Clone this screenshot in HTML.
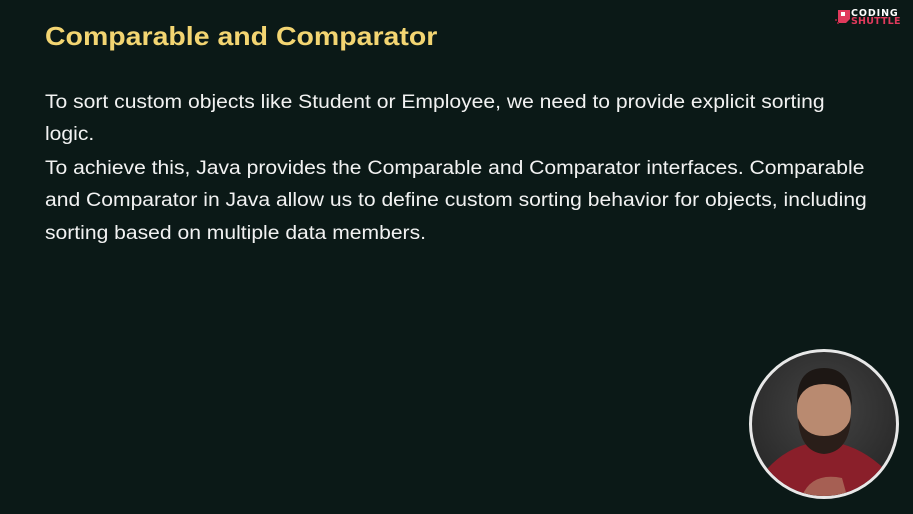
<!DOCTYPE html>
<html><head><meta charset="utf-8"><style>
html,body{margin:0;padding:0}
body{width:913px;height:514px;background:#0b1917;position:relative;overflow:hidden;font-family:"Liberation Sans",sans-serif}
.t{position:absolute;left:45px;top:21px;font-size:26px;font-weight:bold;color:#f3d572;white-space:nowrap;transform-origin:left top;transform:scaleX(1.095)}
.l{position:absolute;left:45px;font-size:19px;color:#f2f2f2;white-space:nowrap;transform-origin:left top;transform:scaleX(1.11)}
.logo{position:absolute;left:835px;top:9px}
.cw{position:absolute;left:851px;top:10px;font-size:9.5px;font-weight:bold;color:#fff;letter-spacing:0.9px;line-height:8px;font-family:"DejaVu Sans",sans-serif}
.cs{color:#e03a5c;letter-spacing:0.2px}
.circ{position:absolute;left:749px;top:349px;width:144px;height:144px;border-radius:50%;border:3px solid #e8e8e8;overflow:hidden;background:radial-gradient(circle at 50% 40%,#444 0,#2b2b2b 70%)}
</style></head><body>
<div class="t">Comparable and Comparator</div>
<div class="l" style="top:92px">To sort custom objects like Student or Employee, we need to provide explicit sorting</div>
<div class="l" style="top:124px">logic.</div>
<div class="l" style="top:158px">To achieve this, Java provides the Comparable and Comparator interfaces. Comparable</div>
<div class="l" style="top:190px">and Comparator in Java allow us to define custom sorting behavior for objects, including</div>
<div class="l" style="top:223px">sorting based on multiple data members.</div>
<svg class="logo" width="16" height="16" viewBox="0 0 16 16"><path d="M3 1h12v9l-4 4H3z" fill="#e03a5c"/><rect x="6" y="3" width="4" height="4" fill="#fff"/><rect x="0" y="10" width="2" height="2" fill="#8a2035"/><rect x="2" y="13" width="2" height="2" fill="#8a2035"/></svg>
<div class="cw">CODING<br><span class="cs">SHUTTLE</span></div>
<div class="circ">
<svg width="144" height="144" viewBox="0 0 144 144">
<path d="M5 130 Q25 100 55 92 L90 92 Q118 100 140 125 L144 144 H0z" fill="#8a1f2a"/>
<ellipse cx="72" cy="58" rx="27" ry="34" fill="#b98a70"/>
<path d="M45 52 Q44 16 72 16 Q100 16 100 54 Q95 32 72 32 Q50 32 45 52z" fill="#1d1714"/>
<path d="M46 66 Q48 100 72 102 Q97 100 99 66 Q92 84 72 84 Q53 84 46 66z" fill="#2a1e19"/>
<path d="M50 144 Q60 120 90 126 L95 144z" fill="#b98a70" opacity="0.6"/>
</svg>
</div>
</body></html>
